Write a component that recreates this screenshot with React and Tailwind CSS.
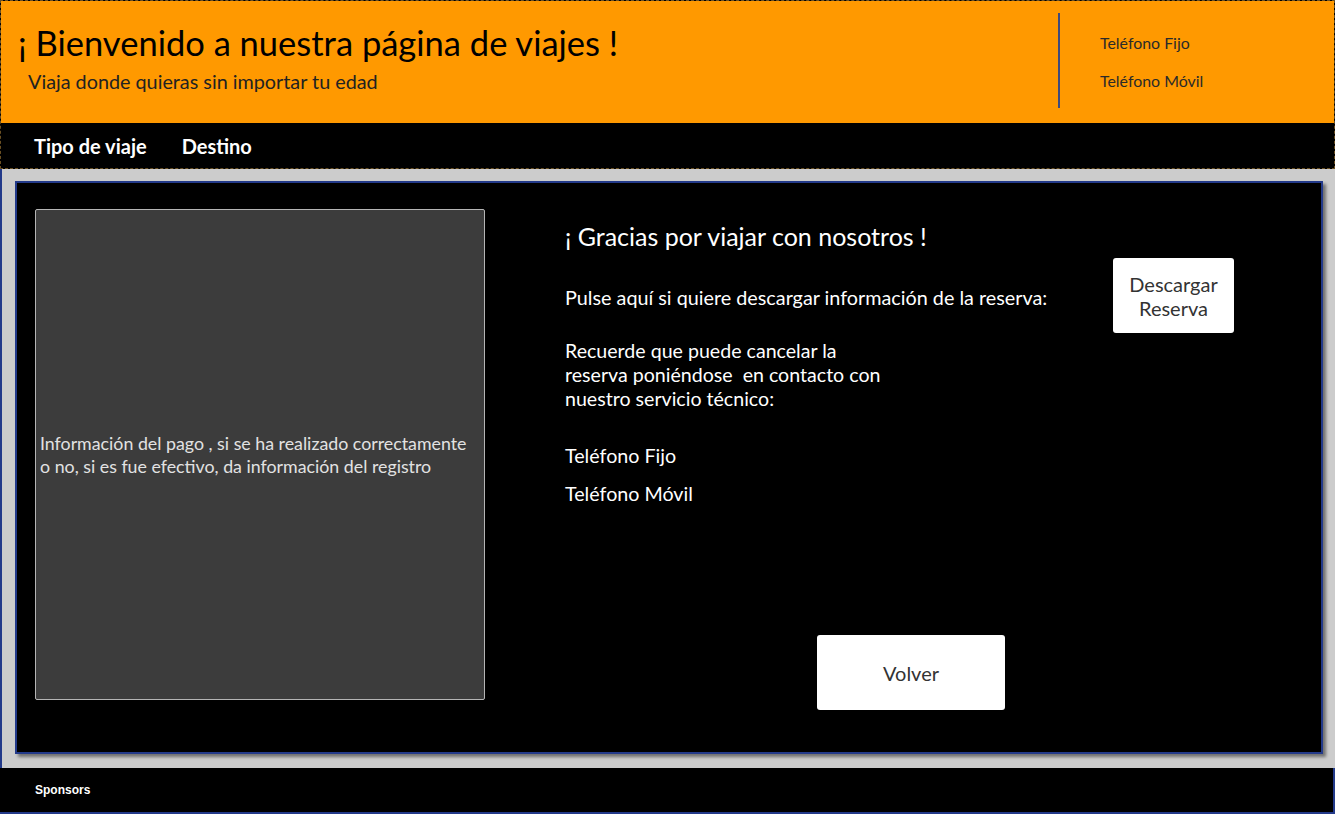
import React from "react";

const phones = ["Teléfono Fijo", "Teléfono Móvil"];

const App = () => {
  return (
    <div className="w-[1335px] h-[814px] flex flex-col bg-black font-['Lato',sans-serif] overflow-hidden">
      {/* Cabecera */}
      <header className="h-[169px] flex flex-col border border-dashed border-[#6b5022]">
        <div className="h-[122px] bg-[#ff9900] flex">
          <div className="flex-1 pl-[17px] pt-[21px]">
            <h1 className="text-[34.5px] leading-[42px] text-black">
              ¡ Bienvenido a nuestra página de viajes !
            </h1>
            <p className="mt-[4px] ml-[10px] text-[19.8px] leading-[26px] text-[#222]">
              Viaja donde quieras sin importar tu edad
            </p>
          </div>
          <div className="w-[276px] flex items-start pt-[12px]">
            <div className="w-[2px] h-[95px] bg-[#3d4a7e]" />
            <div className="ml-[40px] pt-[20px] flex flex-col gap-[18px] text-[15.9px] leading-[20px] text-[#2a2a2a]">
              {phones.map((p) => (
                <span key={p}>{p}</span>
              ))}
            </div>
          </div>
        </div>
        <nav className="flex-1 bg-black flex items-center gap-[35px] pl-[33px] pt-[1px]">
          <a className="text-white font-bold text-[20px]">Tipo de viaje</a>
          <a className="text-white font-bold text-[20px]">Destino</a>
        </nav>
      </header>

      {/* Contenido */}
      <main className="h-[599px] bg-[#cccccc] border-l-2 border-[#233a8a] pl-[13px] pr-[12px] pt-[12px] pb-[14px]">
        <div className="h-full bg-black border-2 border-[#233a8a] shadow-[3px_3px_3px_rgba(0,0,0,0.45)] flex pl-[18px] pt-[26px]">
          <div className="w-[450px] h-[491px] bg-[#3c3c3c] border border-[#b5b5b5] rounded-[2px] flex items-center px-[4px]">
            <p className="text-[#e2e2e2] text-[17.8px] leading-[23px]">
              Información del pago , si se ha realizado correctamente o no, si es fue efectivo, da información del registro
            </p>
          </div>

          <div className="flex-1 pl-[80px] pt-[11px] flex flex-col text-white">
            <h2 className="text-[25px] leading-[32px]">¡ Gracias por viajar con nosotros !</h2>
            <div className="flex items-start mt-[6px]">
              <p className="text-[19.8px] leading-[24px] mt-[27px] w-[548px]">
                Pulse aquí si quiere descargar información de la reserva:
              </p>
              <button className="w-[121px] h-[75px] bg-white rounded-[3px] text-[#333] text-[20px] leading-[24px]">
                Descargar
                <br />
                Reserva
              </button>
            </div>
            <p className="text-[19.6px] leading-[24px] mt-[6px] whitespace-pre">
              {"Recuerde que puede cancelar la\nreserva poniéndose  en contacto con\nnuestro servicio técnico:"}
            </p>
            <div className="flex flex-col gap-[14px] mt-[33px] text-[19.7px] leading-[24px]">
              {phones.map((p) => (
                <span key={p}>{p}</span>
              ))}
            </div>
            <button className="ml-[252px] mt-[129px] w-[188px] h-[75px] bg-white rounded-[3px] text-[#333] text-[20px]">
              Volver
            </button>
          </div>
        </div>
      </main>

      {/* Pie */}
      <footer className="flex-1 bg-black border-r-2 border-b-2 border-[#233a8a] flex items-center pl-[35px]">
        <span className="text-white font-bold text-[12px] font-['Liberation_Sans',Arial,sans-serif]">Sponsors</span>
      </footer>
    </div>
  );
};

export default App;
